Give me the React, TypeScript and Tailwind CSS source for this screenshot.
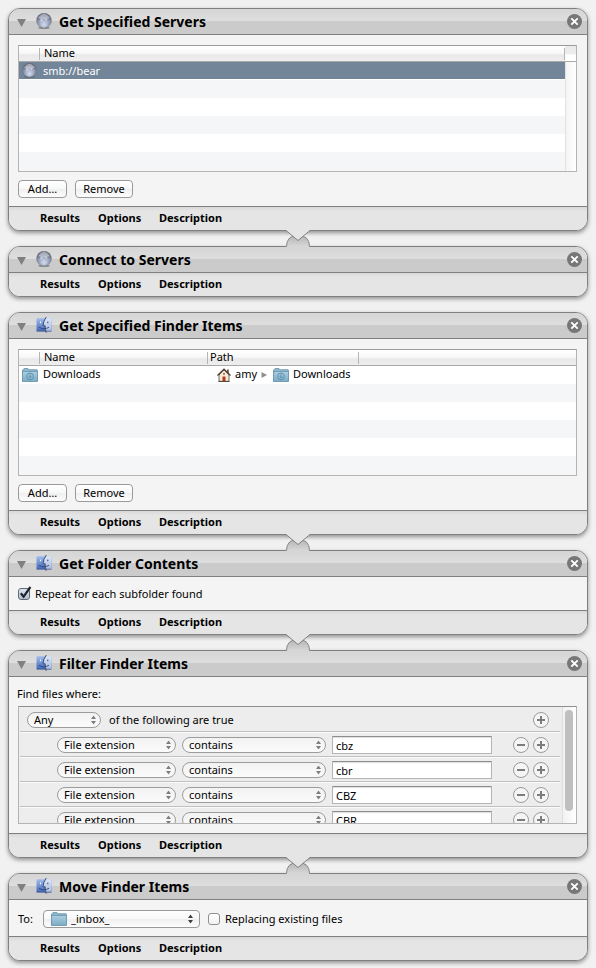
import { useId, useState } from "react";
import type { ReactNode } from "react";

function GlobeIcon({ className = "" }: { className?: string }) {
  const id = useId();
  return (
    <svg viewBox="0 0 16 16" className={className} aria-hidden="true">
      <defs>
        <radialGradient id={id} cx="0.5" cy="0.75" r="0.75">
          <stop offset="0" stopColor="#d3dcf0" />
          <stop offset="0.45" stopColor="#98a2bb" />
          <stop offset="1" stopColor="#565b6c" />
        </radialGradient>
      </defs>
      <ellipse cx="8" cy="14.8" rx="6" ry="1.2" fill="#666" opacity="0.6" />
      <circle cx="8" cy="7.6" r="7.4" fill={`url(#${id})`} stroke="#6c707e" strokeWidth="0.5" />
      <g fill="none" stroke="#dfe6f5" strokeWidth="0.6" opacity="0.3">
        <ellipse cx="8" cy="7.7" rx="3.2" ry="6.8" />
        <path d="M8 1v13.4M1.2 8.4h13.6M2.4 4.6q5.600 1.600 11.200 0" />
      </g>
      <path d="M2.600 5Q4 1 8 1t5.400 4Q8 7 2.600 5Z" fill="#fff" opacity="0.35" />
      <circle cx="5.600" cy="7" r="1.300" fill="#fff" opacity="0.450" />
      <circle cx="10" cy="6.600" r="1" fill="#fff" opacity="0.450" />
    </svg>
  );
}

function FinderIcon({ className = "" }: { className?: string }) {
  const id = useId();
  return (
    <svg viewBox="0 0 16 16" className={className} aria-hidden="true">
      <defs>
        <linearGradient id={id} x1="0" y1="0" x2="0" y2="1">
          <stop offset="0" stopColor="#a3bdec" />
          <stop offset="1" stopColor="#3f68ba" />
        </linearGradient>
        <linearGradient id={`${id}r`} x1="0" y1="0" x2="0" y2="1">
          <stop offset="0" stopColor="#dde6f7" />
          <stop offset="1" stopColor="#a9bbdf" />
        </linearGradient>
      </defs>
      <rect x="0.5" y="1.2" width="15" height="13" rx="0.8" fill={`url(#${id})`} />
      <path d="M10 1.2h4.7q.8 0 .8.8v11.4q0 .8-.8.8H9.6Q9 11.600 9 9H7Q7.200 4 10 1.200Z" fill={`url(#${id}r)`} />
      <path d="M.5 14.200h15" stroke="#3f5684" strokeWidth="0.7" />
      <path
        d="M10.300 0Q7.200 4 7 8.800H9.200Q9 12.500 10.200 15.800"
        fill="none"
        stroke="#33436b"
        strokeWidth="0.9"
      />
      <path d="M3 10.200Q8 13.400 13 10.200" fill="none" stroke="#33436b" strokeWidth="0.9" />
      <path d="M4.500 4.600v1.600" stroke="#fff" strokeWidth="1" />
      <path d="M11.800 4.600v1.600" stroke="#33436b" strokeWidth="1" />
    </svg>
  );
}

function FolderIcon({ download = false, className = "" }: { download?: boolean; className?: string }) {
  const id = useId();
  return (
    <svg viewBox="0 0 16 14" className={className} aria-hidden="true">
      <defs>
        <linearGradient id={id} x1="0" y1="0" x2="0" y2="1">
          <stop offset="0" stopColor="#abcfe1" />
          <stop offset="1" stopColor="#7babc5" />
        </linearGradient>
      </defs>
      <path d="M.5 13V2.200q0-.5.5-.5h.7L2 .5h4l.5 1.200h8.400q.5 0 .5.500V13Z" fill="#8db7cd" stroke="#6a96ae" strokeWidth="0.8" />
      <rect x="0.500" y="3.500" width="15" height="10" fill={`url(#${id})`} stroke="#6791a8" strokeWidth="0.700" />
      {download && (
        <g fill="none" stroke="#588ba8">
          <circle cx="8" cy="8.400" r="3.400" strokeWidth="0.900" />
          <path d="M8 6.200v3.400M6.600 8.400 8 9.900l1.400-1.500" strokeWidth="0.900" />
        </g>
      )}
    </svg>
  );
}

function HouseIcon({ className = "" }: { className?: string }) {
  return (
    <svg viewBox="0 0 14 14" className={className} aria-hidden="true">
      <path d="M10 1.500h1.800v4H10Z" fill="#6b5b4c" />
      <path d="M2 7 7 2l5 5v6.300H2Z" fill="#f3ead9" stroke="#4b4137" strokeWidth="0.800" />
      <path d="M.5 7.500 7 1l6.500 6.500" fill="none" stroke="#4d4035" strokeWidth="1.200" />
      <rect x="5.500" y="8.500" width="3" height="4.800" fill="#b8391a" />
      <rect x="6.200" y="4.800" width="1.600" height="2" fill="#c0502a" />
      <path d="M1.500 13.500h11" stroke="#4d4d3e" strokeWidth="1" />
    </svg>
  );
}

function CloseIcon() {
  return (
    <svg viewBox="0 0 15 15" className="block size-[15px]" aria-hidden="true">
      <circle cx="7.500" cy="7.500" r="7.500" fill="#777" />
      <path d="M4.300 4.300l6.400 6.400M10.700 4.300l-6.400 6.400" stroke="#fff" strokeWidth="1.900" />
    </svg>
  );
}

function Connector() {
  const id = useId();
  return (
    <svg viewBox="0 0 28 17" className="relative z-10 h-[17px] w-7 shrink-0" aria-hidden="true">
      <defs>
        <linearGradient id={id} x1="0" y1="0" x2="0" y2="1">
          <stop offset="0" stopColor="#b4b4b4" />
          <stop offset="1" stopColor="#d8d8d8" />
        </linearGradient>
      </defs>
      <path d="M2.500 17Q2.500 5.500 14 5.500T25.500 17Z" fill={`url(#${id})`} />
      <path d="M2.500 16.500Q2.500 5.500 14 5.500T25.500 16.500" fill="none" stroke="#868686" />
      <path d="M1 0H27L25.500 .8 14 10.500 2.500 .8Z" fill="#e5e5e5" />
      <path d="M.5 .5H2L14 10.500 26 .5H27.500" fill="none" stroke="#808080" />
    </svg>
  );
}

interface ActionProps {
  title: string;
  icon: "globe" | "finder";
  children?: ReactNode;
}

function Action({ title, icon, children }: ActionProps) {
  return (
    <section className="overflow-hidden rounded-xl border border-[#808080] bg-[#f4f4f4] shadow-[0_2px_4px_rgba(0,0,0,0.4)]">
      <header className="flex h-[26px] items-center border-b border-[#808080] bg-[linear-gradient(#d5d5d5,#dedede_48%,#cbcbcb_48%,#cbcbcb)] pr-[5px] pl-2">
        <button type="button" aria-label={`Collapse ${title}`} className="w-[9px] pt-[2px]">
          <svg viewBox="0 0 9 8" className="block h-2 w-[9px]" aria-hidden="true">
            <path d="M0 0h9L4.500 8Z" fill="#808080" />
          </svg>
        </button>
        {icon === "globe" ? (
          <GlobeIcon className="mb-[2px] ml-[10px] size-4" />
        ) : (
          <FinderIcon className="mb-[2px] ml-[10px] size-4" />
        )}
        <h2 className="ml-[7px] text-[14px] leading-5 font-bold">{title}</h2>
        <button type="button" aria-label={`Remove ${title}`} className="ml-auto">
          <CloseIcon />
        </button>
      </header>
      {children && <div className="border-b border-[#808080]">{children}</div>}
      <footer className="grid h-[23px] grid-cols-[58px_61px_auto] items-start justify-start bg-[linear-gradient(#d8d8d8,#e5e5e5_4px)] pt-[3px] pl-[31px] text-[11px] font-bold">
        <button type="button" className="text-left">Results</button>
        <button type="button" className="text-left">Options</button>
        <button type="button" className="text-left">Description</button>
      </footer>
    </section>
  );
}

function PushButton({ children, className }: { children: ReactNode; className: string }) {
  return (
    <button
      type="button"
      className={`h-[18px] rounded border border-[#9a9a9a] bg-[linear-gradient(#fff,#f8f8f8_50%,#efefef_50%,#fdfdfd)] leading-4 ${className}`}
    >
      {children}
    </button>
  );
}

function AddRemove() {
  return (
    <div className="mt-2 flex gap-2">
      <PushButton className="w-[49px]">Add…</PushButton>
      <PushButton className="w-[58px]">Remove</PushButton>
    </div>
  );
}

const headerFill = "bg-[linear-gradient(#fff,#f8f8f8_45%,#e9e9e9_55%,#efefef)]";

function ColumnHead({ children, className = "", divider = true }: { children?: ReactNode; className?: string; divider?: boolean }) {
  return (
    <th className="h-4 border-b border-[#a9a9a9] p-0 text-left font-normal">
      <div className={`h-3 leading-[10px] ${divider ? "border-r border-[#b5b5b5]" : ""} ${className}`}>{children}</div>
    </th>
  );
}

function ServerTable() {
  return (
    <div className="flex h-[127px] border border-[#b4b4b4] border-t-[#9a9a9a] bg-white">
      <table className="h-full flex-1 table-fixed border-separate border-spacing-0">
        <colgroup>
          <col className="w-[21px]" />
          <col />
        </colgroup>
        <thead className={headerFill}>
          <tr>
            <ColumnHead />
            <ColumnHead className="pl-1">Name</ColumnHead>
          </tr>
        </thead>
        <tbody>
          <tr className="h-[18px] bg-[#728599] text-white">
            <td className="border-b border-white p-0 pl-[3px]">
              <GlobeIcon className="h-[15px] w-[15px] max-w-none" />
            </td>
            <td className="border-b border-white p-0 pb-px pl-[3px] leading-[15px]">smb://bear</td>
          </tr>
          {["a", "b", "c", "d"].map((k) => (
            <tr key={k} className="h-[18px] odd:bg-white even:bg-[#f5f6f8]">
              <td colSpan={2} className="p-0" />
            </tr>
          ))}
          <tr className="bg-[#f5f6f8]">
            <td colSpan={2} className="p-0" />
          </tr>
        </tbody>
      </table>
      <div className="w-[11px]">
        <div className="h-4 border-b border-[#a9a9a9] bg-[linear-gradient(#eaeaea,#ededed_50%,#fff_60%)]" />
        <div className="h-[109px] border-l border-[#e2e2e2] bg-[linear-gradient(90deg,#f4f4f4,#fff)]" />
      </div>
    </div>
  );
}

function FinderTable() {
  return (
    <div className="h-[127px] border border-[#b4b4b4] border-t-[#9a9a9a] bg-white">
      <table className="h-full w-full table-fixed border-separate border-spacing-0">
        <colgroup>
          <col className="w-[21px]" />
          <col className="w-[168px]" />
          <col className="w-[151px]" />
          <col />
        </colgroup>
        <thead className={headerFill}>
          <tr>
            <ColumnHead />
            <ColumnHead className="pl-1">Name</ColumnHead>
            <ColumnHead className="pl-[2px]">Path</ColumnHead>
            <ColumnHead divider={false} />
          </tr>
        </thead>
        <tbody>
          <tr className="h-[18px]">
            <td className="p-0 pl-[3px]">
              <FolderIcon download className="h-[14px] w-4" />
            </td>
            <td className="p-0 pb-[2px] pl-[3px] leading-4">Downloads</td>
            <td className="p-0 pl-[9px] leading-4">
              <div className="flex items-center">
                <HouseIcon className="size-[14px]" />
                <span className="ml-1 w-[26px] pb-[2px]">amy</span>
                <svg viewBox="0 0 6 6" className="h-[6px] w-[6px]" aria-hidden="true">
                  <path d="M.5 0 6 3 .5 6Z" fill="#8f8f8f" />
                </svg>
                <FolderIcon download className="ml-[6px] h-[14px] w-4 shrink-0" />
                <span className="ml-1 pb-[2px]">Downloads</span>
              </div>
            </td>
            <td className="p-0" />
          </tr>
          {["a", "b", "c", "d"].map((k) => (
            <tr key={k} className="h-[18px] odd:bg-white even:bg-[#f5f6f8]">
              <td colSpan={4} className="p-0" />
            </tr>
          ))}
          <tr className="bg-[#f5f6f8]">
            <td colSpan={4} className="p-0" />
          </tr>
        </tbody>
      </table>
    </div>
  );
}

function Arrows({ className }: { className: string }) {
  return (
    <svg viewBox="0 0 5 9" className={`pointer-events-none absolute top-1/2 h-[9px] w-[5px] -translate-y-1/2 ${className}`} aria-hidden="true">
      <path d="M0 3.500 2.500 0 5 3.500ZM0 5.500 2.500 9 5 5.500Z" fill="currentColor" />
    </svg>
  );
}

function RoundSelect({ label, options, className }: { label: string; options: string[]; className: string }) {
  return (
    <span className={`relative block shrink-0 ${className}`}>
      <select
        aria-label={label}
        className="block h-4 w-full appearance-none rounded-full border border-[#9c9c9c] bg-[linear-gradient(#f2f2f2,#fbfbfb)] pr-4 pl-[6px] leading-[14px]"
      >
        {options.map((o) => (
          <option key={o}>{o}</option>
        ))}
      </select>
      <Arrows className="right-[5px] text-[#7d7d7d]" />
    </span>
  );
}

function RoundButton({ kind }: { kind: "add" | "remove" }) {
  return (
    <button type="button" aria-label={kind === "add" ? "Add rule" : "Remove rule"} className="block shrink-0">
      <svg viewBox="0 0 16 16" className="block size-4" aria-hidden="true">
        <circle cx="8" cy="8" r="7.500" fill="#f5f5f5" stroke="#9a9a9a" />
        <path d={kind === "add" ? "M4 8h8M8 4v8" : "M4 8h8"} stroke="#7c7c7c" strokeWidth="2" />
      </svg>
    </button>
  );
}

function Rule({ value }: { value: string }) {
  const [text, setText] = useState(value);
  return (
    <div className="flex h-[25px] shrink-0 items-center border-b border-[#c0c0c0] pt-px pr-[11px] pl-[37px] shadow-[0_1px_0_#fafafa]">
      <RoundSelect label="Attribute" options={["File extension", "Name", "Kind"]} className="w-[119px]" />
      <RoundSelect label="Comparison" options={["contains", "is", "is not"]} className="ml-[6px] w-36" />
      <input
        type="text"
        aria-label="Value"
        value={text}
        onChange={(e) => setText(e.target.value)}
        className="ml-[6px] h-[18px] w-40 border border-[#b5b5b5] border-t-[#8e8e8e] bg-white px-[3px] pt-px leading-[15px] shadow-[inset_0_1px_1px_#ddd]"
      />
      <div className="ml-auto flex gap-1">
        <RoundButton kind="remove" />
        <RoundButton kind="add" />
      </div>
    </div>
  );
}

function CheckBox({ label, defaultChecked = false }: { label: string; defaultChecked?: boolean }) {
  return (
    <label className="flex items-center gap-[5px]">
      <span className="relative block size-3">
        <input
          type="checkbox"
          defaultChecked={defaultChecked}
          className="peer block size-3 appearance-none rounded-[3px] border border-[#8f8f8f] bg-[linear-gradient(#fff,#f2f2f2)] checked:border-[#5f6a78] checked:bg-[linear-gradient(#dfe5ec,#b4bfcd)]"
        />
        <svg viewBox="0 0 14 14" className="pointer-events-none absolute -top-[2px] left-0 hidden size-[14px] peer-checked:block" aria-hidden="true">
          <path d="M2.800 7.200 5.600 10.600 12.400 1" fill="none" stroke="#1d2530" strokeWidth="2.200" />
        </svg>
      </span>
      {label}
    </label>
  );
}

function Link() {
  return (
    <div className="-my-px flex justify-center">
      <Connector />
    </div>
  );
}

export default function App() {
  return (
    <main className="min-h-screen bg-[#f1f1f1] px-2 pt-2 pb-[7px] font-['Noto_Sans','Open_Sans',sans-serif] text-[11px] leading-4 text-black">
      <Action title="Get Specified Servers" icon="globe">
        <div className="pt-[10px] pr-[10px] pb-2 pl-[9px]">
          <ServerTable />
          <AddRemove />
        </div>
      </Action>
      <Link />
      <Action title="Connect to Servers" icon="globe" />
      <div className="h-[15px]" />
      <Action title="Get Specified Finder Items" icon="finder">
        <div className="pt-[10px] pr-[10px] pb-2 pl-[9px]">
          <FinderTable />
          <AddRemove />
        </div>
      </Action>
      <Link />
      <Action title="Get Folder Contents" icon="finder">
        <div className="flex h-[33px] items-center px-[9px]">
          <CheckBox label="Repeat for each subfolder found" defaultChecked />
        </div>
      </Action>
      <Link />
      <Action title="Filter Finder Items" icon="finder">
        <div className="py-[9px] pr-[10px] pl-2">
          <p className="mb-1 leading-4">Find files where:</p>
          <div className="ml-px flex h-[118px] overflow-hidden border border-[#b4b4b4] border-t-[#8e8e8e] bg-[#ededed]">
            <div className="ml-px flex flex-1 flex-col overflow-hidden">
              <div className="flex h-[25px] shrink-0 items-center border-b border-[#c0c0c0] pt-px pr-[11px] pl-[7px] shadow-[0_1px_0_#fafafa]">
                <RoundSelect label="Match" options={["Any", "All", "None"]} className="w-[74px]" />
                <span className="ml-2">of the following are true</span>
                <div className="ml-auto">
                  <RoundButton kind="add" />
                </div>
              </div>
              <Rule value="cbz" />
              <Rule value="cbr" />
              <Rule value="CBZ" />
              <Rule value="CBR" />
            </div>
            <div className="ml-[2px] w-[14px] border-l border-[#dedede] bg-[linear-gradient(90deg,#f2f2f2,#fff)] pt-[3px] pl-[2px]">
              <div className="h-[101px] w-2 rounded-full bg-[#bfbfbf]" />
            </div>
          </div>
        </div>
      </Action>
      <Link />
      <Action title="Move Finder Items" icon="finder">
        <div className="flex h-9 items-center px-[9px] pt-px">
          <label htmlFor="destination" className="w-[25px]">To:</label>
          <span className="relative block w-[157px]">
            <select
              id="destination"
              className="block h-[18px] w-full appearance-none rounded border border-[#9a9a9a] bg-[linear-gradient(#fff,#f8f8f8_50%,#efefef_50%,#fdfdfd)] pr-4 pl-[27px] leading-4"
            >
              <option>_inbox_</option>
              <option>Downloads</option>
            </select>
            <FolderIcon className="pointer-events-none absolute top-[2px] left-2 h-[14px] w-4" />
            <Arrows className="right-[7px] text-[#3f3f3f]" />
          </span>
          <div className="ml-2">
            <CheckBox label="Replacing existing files" />
          </div>
        </div>
      </Action>
    </main>
  );
}
